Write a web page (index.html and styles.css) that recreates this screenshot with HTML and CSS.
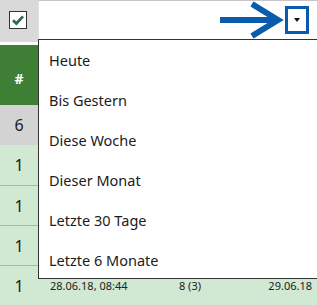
FILE: index.html
```html
<!DOCTYPE html>
<html lang="de">
<head>
    <meta charset="UTF-8">
    <meta name="viewport" content="width=device-width, initial-scale=1.0">
    <title>Filter</title>
    <link rel="stylesheet" href="styles.css">
</head>
<body>
    <div class="grid">
        <div class="toolbar">
            <div class="select-cell">
                <span class="check">
                    <svg width="14" height="14" viewBox="0 0 14 14">
                        <path d="M2 7.2 L5.4 10.4 L12 3.4" fill="none" stroke="#2f6a55" stroke-width="2.8"/>
                    </svg>
                </span>
            </div>
            <div class="filter-input">
                <span class="drop-btn"><span class="caret"></span></span>
            </div>
        </div>
        <div class="gap-row"></div>

        <div class="row row-head"><div class="num">#</div><div class="rest"></div></div>
        <div class="row row-total"><div class="num">6</div><div class="rest"></div></div>
        <div class="row row-item"><div class="num">1</div><div class="rest"></div></div>
        <div class="row row-item line"><div class="num">1</div><div class="rest"></div></div>
        <div class="row row-item line"><div class="num">1</div><div class="rest"></div></div>
        <div class="row row-item line">
            <div class="num">1</div>
            <div class="cell-date">28.06.18, 08:44</div>
            <div class="cell-count">8 (3)</div>
            <div class="cell-end">29.06.18</div>
        </div>
    </div>

    <!-- Dropdown der Zeitfilter -->
    <ul class="menu">
        <li>Heute</li>
        <li>Bis Gestern</li>
        <li>Diese Woche</li>
        <li>Dieser Monat</li>
        <li>Letzte 30 Tage</li>
        <li>Letzte 6 Monate</li>
    </ul>

    <!-- Hinweispfeil auf den Button -->
    <svg class="pointer" width="317" height="40" viewBox="0 0 317 40">
        <line x1="220" y1="20" x2="276" y2="20" stroke="#0a5bab" stroke-width="6"/>
        <polyline points="252,4 278,20 252,36" fill="none" stroke="#0a5bab" stroke-width="6"/>
    </svg>
</body>
</html>
```

FILE: styles.css
```css
* {
    margin: 0;
    padding: 0;
    box-sizing: border-box;
}

body {
    font-family: "Noto Sans", "Open Sans", sans-serif;
    width: 317px;
    height: 305px;
    overflow: hidden;
    position: relative;
    background: #ffffff;
    color: #1b1b1b;
}

.toolbar {
    display: flex;
    height: 42px;
}

.select-cell {
    width: 38px;
    background: #d9d9d9;
    padding: 11px 0 0 9px;
}

.check {
    display: flex;
    align-items: center;
    justify-content: center;
    width: 18px;
    height: 18px;
    background: #ffffff;
    border: 1.5px solid #333333;
}

.filter-input {
    flex: 1;
    border-top: 1px solid #c6c6c6;
    border-left: 1px solid #e2e2e2;
    display: flex;
    justify-content: flex-end;
    padding: 5px 8px 0 0;
}

.drop-btn {
    width: 24px;
    height: 28px;
    border: 3px solid #0a5bab;
    display: flex;
    align-items: center;
    justify-content: center;
}

.caret {
    width: 0;
    height: 0;
    border-left: 3.5px solid transparent;
    border-right: 3.5px solid transparent;
    border-top: 4px solid #111111;
}

.gap-row {
    height: 3px;
}

.row {
    display: flex;
    height: 40px;
    align-items: center;
}

.num {
    width: 38px;
    text-align: center;
    font-size: 16px;
}

.rest {
    flex: 1;
}

.row-head {
    height: 60px;
    background: #3f7f35;
    color: #ffffff;
    align-items: flex-end;
    padding-bottom: 17px;
}

.row-head .num {
    font-weight: bold;
    font-size: 14px;
}

.row-total {
    background: #d3d3d3;
}

.row-item {
    background: #d1e8d3;
}

.row-item.line {
    border-top: 1px solid #a9b8aa;
}

.cell-date {
    width: 128px;
    padding-left: 12px;
    font-size: 11px;
    color: #222222;
}

.cell-count {
    width: 48px;
    text-align: center;
    font-size: 11px;
    color: #222222;
}

.cell-end {
    flex: 1;
    text-align: right;
    padding-right: 5px;
    font-size: 11px;
    color: #222222;
}

.menu {
    position: absolute;
    left: 38px;
    top: 39px;
    width: 285px;
    height: 240px;
    overflow: hidden;
    list-style: none;
    background: #ffffff;
    border: 1px solid #333333;
}

.menu li {
    height: 40px;
    line-height: 40px;
    padding-left: 10px;
    font-size: 14.5px;
    color: #1b1b1b;
}

.pointer {
    position: absolute;
    left: 0;
    top: 0;
}
```
